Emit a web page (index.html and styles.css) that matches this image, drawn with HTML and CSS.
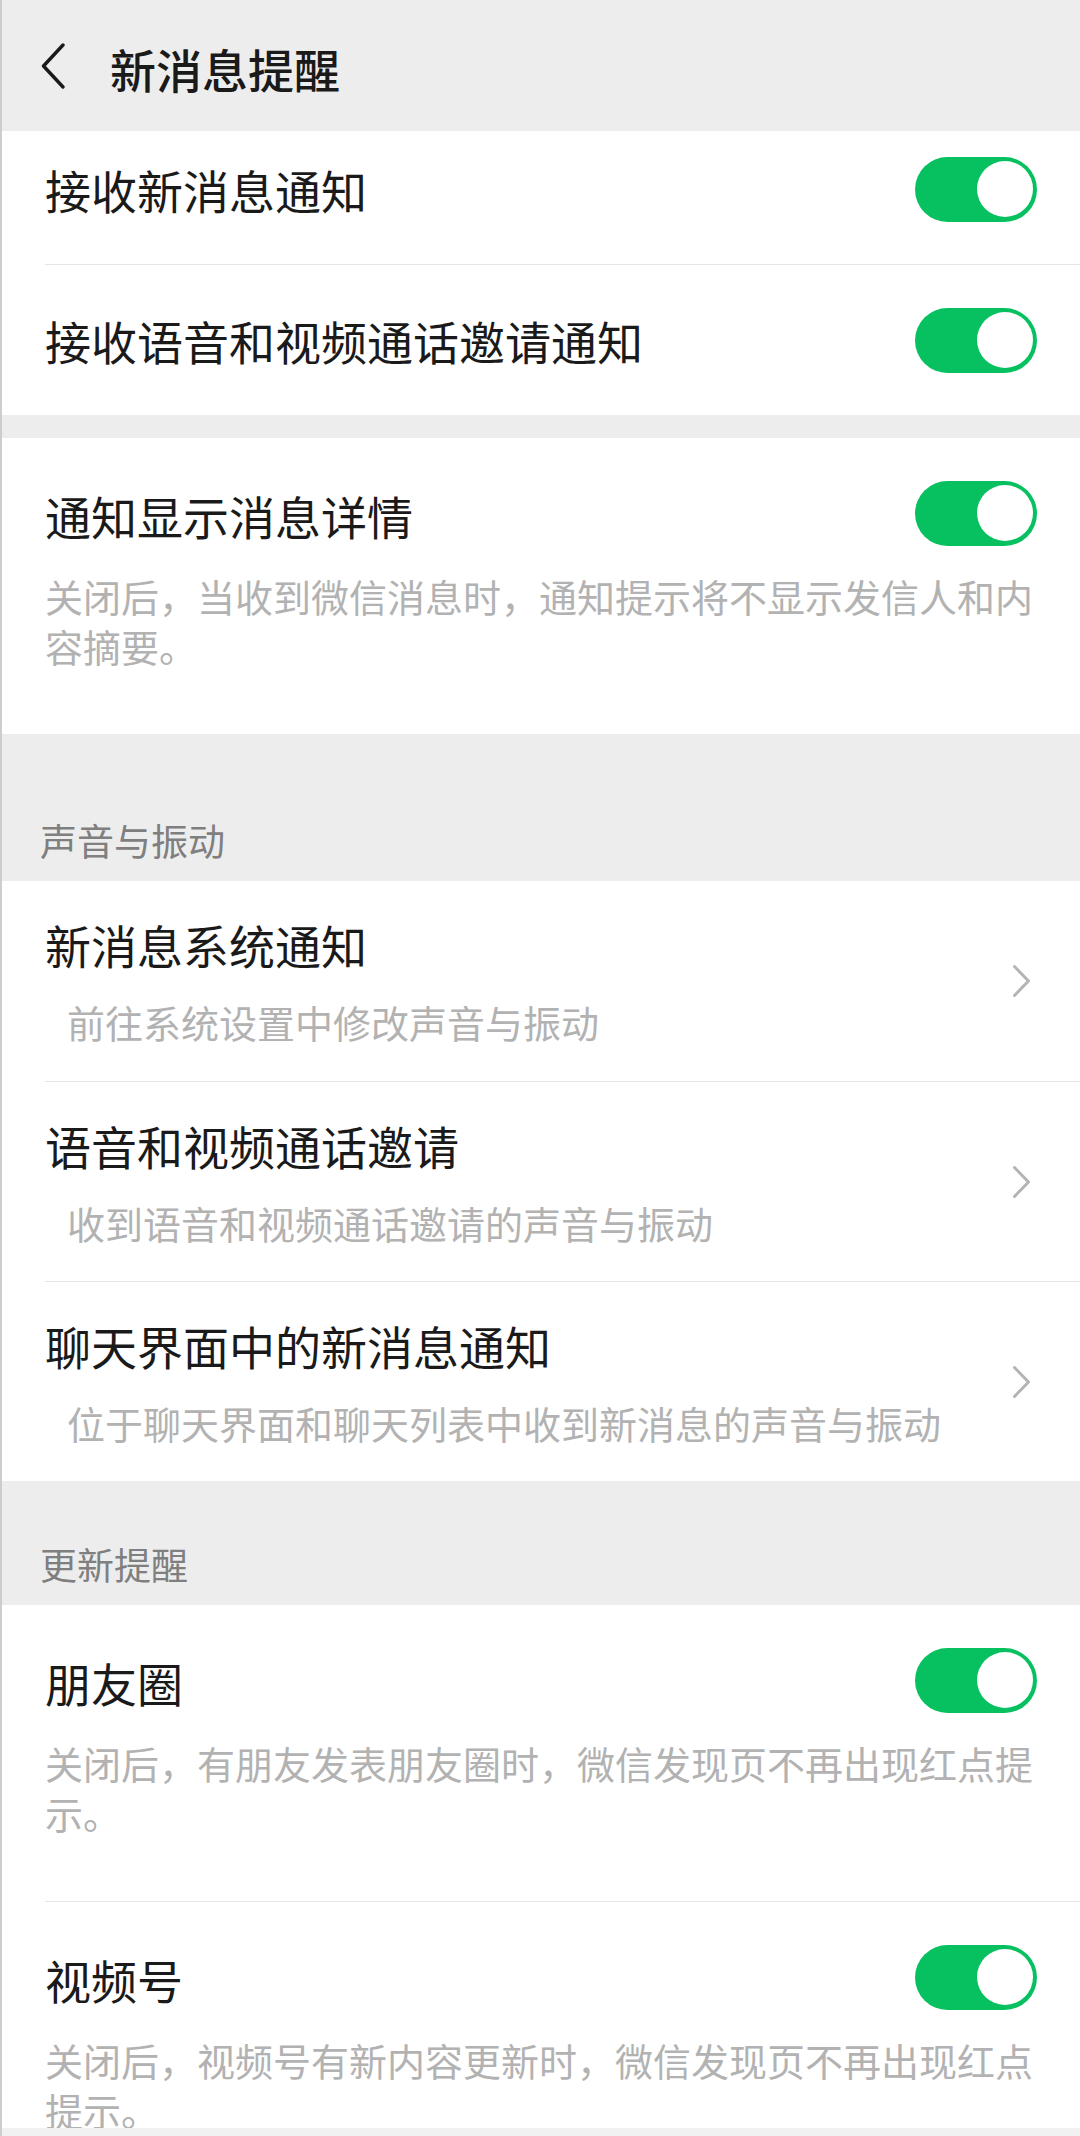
FILE: index.html
```html
<!DOCTYPE html>
<html lang="zh-CN">
<head>
<meta charset="utf-8">
<title>新消息提醒</title>
<link rel="stylesheet" href="styles.css">
</head>
<body>
<div class="page">
  <header class="topbar">
    <svg class="back" width="24" height="46" viewBox="0 0 24 46"><path d="M22 2 L2.5 23 L22 44" fill="none" stroke="#1a1a1a" stroke-width="3.4" stroke-linecap="round" stroke-linejoin="round"/></svg>
    <h1 class="title">新消息提醒</h1>
  </header>

  <section class="group">
    <div class="row row-switch row-first">
      <span class="row-title">接收新消息通知</span>
      <span class="switch"><span class="knob"></span></span>
    </div>
    <div class="row row-switch row-second">
      <span class="row-title">接收语音和视频通话邀请通知</span>
      <span class="switch"><span class="knob"></span></span>
    </div>
  </section>

  <div class="gap"></div>

  <section class="group">
    <div class="row row-desc">
      <div class="desc-head">
        <span class="row-title">通知显示消息详情</span>
        <span class="switch"><span class="knob"></span></span>
      </div>
      <p class="desc">关闭后，当收到微信消息时，通知提示将不显示发信人和内容摘要。</p>
    </div>
  </section>

  <div class="gap"></div>
  <div class="group-label">声音与振动</div>

  <section class="group">
    <div class="row row-link">
      <div class="link-text">
        <div class="row-title">新消息系统通知</div>
        <div class="sub">前往系统设置中修改声音与振动</div>
      </div>
      <svg class="chev" width="19" height="34" viewBox="0 0 19 34"><path d="M2.5 2.5 L16.5 17 L2.5 31.5" fill="none" stroke="#b4b4b4" stroke-width="3" stroke-linecap="round" stroke-linejoin="round"/></svg>
    </div>
    <div class="row row-link">
      <div class="link-text">
        <div class="row-title">语音和视频通话邀请</div>
        <div class="sub">收到语音和视频通话邀请的声音与振动</div>
      </div>
      <svg class="chev" width="19" height="34" viewBox="0 0 19 34"><path d="M2.5 2.5 L16.5 17 L2.5 31.5" fill="none" stroke="#b4b4b4" stroke-width="3" stroke-linecap="round" stroke-linejoin="round"/></svg>
    </div>
    <div class="row row-link">
      <div class="link-text">
        <div class="row-title">聊天界面中的新消息通知</div>
        <div class="sub">位于聊天界面和聊天列表中收到新消息的声音与振动</div>
      </div>
      <svg class="chev" width="19" height="34" viewBox="0 0 19 34"><path d="M2.5 2.5 L16.5 17 L2.5 31.5" fill="none" stroke="#b4b4b4" stroke-width="3" stroke-linecap="round" stroke-linejoin="round"/></svg>
    </div>
  </section>

  <div class="group-label">更新提醒</div>

  <section class="group">
    <div class="row row-desc">
      <div class="desc-head">
        <span class="row-title">朋友圈</span>
        <span class="switch"><span class="knob"></span></span>
      </div>
      <p class="desc">关闭后，有朋友发表朋友圈时，微信发现页不再出现红点提示。</p>
    </div>
    <div class="row row-desc">
      <div class="desc-head">
        <span class="row-title">视频号</span>
        <span class="switch"><span class="knob"></span></span>
      </div>
      <p class="desc">关闭后，视频号有新内容更新时，微信发现页不再出现红点提示。</p>
    </div>
  </section>
</div>
<div class="navbar"></div>
</body>
</html>
```

FILE: styles.css
```css
html, body {
  margin: 0;
  padding: 0;
}
body {
  background: #ededed;
  font-family: "Noto Sans CJK SC", "Noto Sans", sans-serif;
  color: #1a1a1a;
  overflow: hidden;
}
body::before {
  content: "";
  position: fixed;
  left: 0;
  top: 0;
  bottom: 0;
  width: 2px;
  background: #cdcdcd;
  z-index: 5;
}
.page {
  width: 1080px;
}
.topbar {
  height: 131px;
  box-sizing: border-box;
  display: flex;
  align-items: center;
  padding-left: 41px;
  background: #ededed;
}
.back {
  display: block;
  flex: none;
}
.title {
  margin: 0 0 0 45px;
  font-size: 46px;
  font-weight: 500;
  line-height: 60px;
  position: relative;
  top: 2px;
  color: #1a1a1a;
}
.group {
  background: #ffffff;
}
.gap {
  height: 23px;
}
.group-label {
  height: 124px;
  box-sizing: border-box;
  padding: 58px 0 16px 40px;
  font-size: 37px;
  line-height: 50px;
  color: #7f7f7f;
}
.row {
  margin-left: 45px;
  box-sizing: border-box;
}
.row + .row {
  border-top: 1px solid #e5e5e5;
}
.row-title {
  font-size: 46px;
  line-height: 56px;
  color: #1a1a1a;
}
.row-switch {
  display: flex;
  align-items: center;
  justify-content: space-between;
  padding-right: 43px;
}
.row-first {
  height: 133px;
  padding-bottom: 17px;
}
.row-second {
  height: 151px;
}
.switch {
  flex: none;
  width: 122px;
  height: 65px;
  border-radius: 33px;
  background: #07c160;
  display: flex;
  align-items: center;
  justify-content: flex-end;
  padding-right: 4px;
  box-sizing: border-box;
}
.knob {
  width: 56px;
  height: 56px;
  border-radius: 50%;
  background: #ffffff;
}
.row-desc {
  padding: 42px 43px 63px 0;
}
.desc-head {
  height: 70px;
  display: flex;
  align-items: center;
  justify-content: space-between;
}
.desc-head .switch {
  position: relative;
  top: -2px;
}
.desc {
  margin: 21px 0 0 0;
  font-size: 38px;
  line-height: 50px;
  color: #b2b2b2;
}
.row-link {
  height: 200px;
  display: flex;
  align-items: center;
  justify-content: space-between;
  padding-right: 49px;
}
.link-text {
  display: flex;
  flex-direction: column;
  padding-top: 1px;
}
.sub {
  margin-top: 25px;
  padding-left: 22px;
  font-size: 38px;
  line-height: 50px;
  color: #b2b2b2;
}
.chev {
  display: block;
  flex: none;
}
.navbar {
  position: fixed;
  left: 0;
  right: 0;
  bottom: 0;
  height: 8px;
  background: #f1f1f1;
}
```
